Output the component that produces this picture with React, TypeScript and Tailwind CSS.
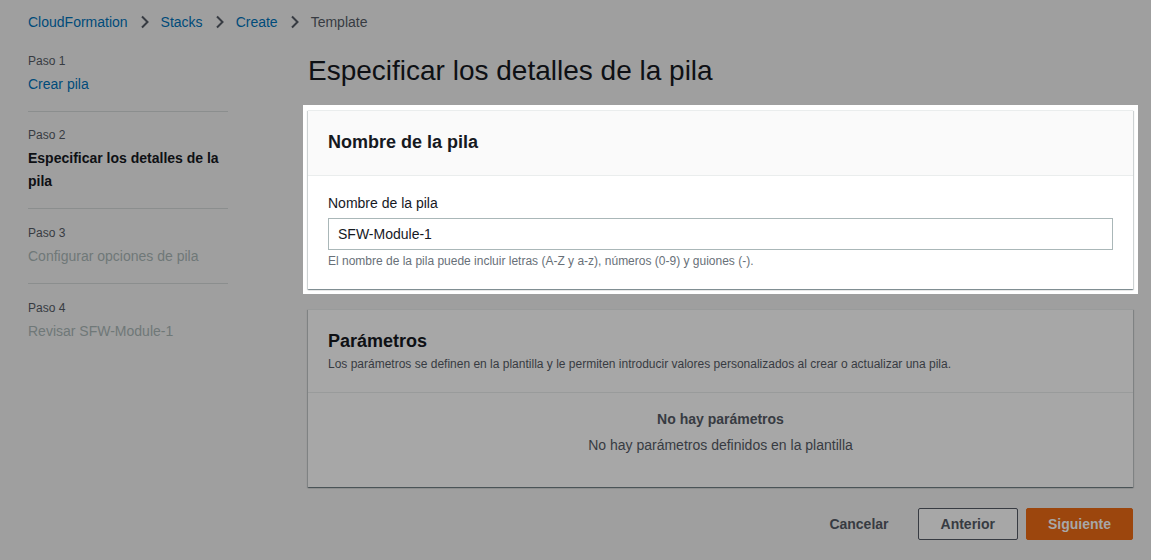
import { type FC } from 'react';

const FONT = { fontFamily: '"Liberation Sans", Arial, sans-serif' };

const Chevron: FC = () => (
  <svg width="9" height="14" viewBox="0 0 9 14" className="mx-[12px] shrink-0">
    <path d="M2 1.5 L7.5 7 L2 12.5" fill="none" stroke="#373b42" strokeWidth="2" />
  </svg>
);

type Step = { label: string; title: string; state: 'link' | 'current' | 'disabled' };

const STEPS: Step[] = [
  { label: 'Paso 1', title: 'Crear pila', state: 'link' },
  { label: 'Paso 2', title: 'Especificar los detalles de la pila', state: 'current' },
  { label: 'Paso 3', title: 'Configurar opciones de pila', state: 'disabled' },
  { label: 'Paso 4', title: 'Revisar SFW-Module-1', state: 'disabled' },
];

const stepTitleClass = (state: Step['state']) => {
  if (state === 'link') return 'text-[#004b7a]';
  if (state === 'current') return 'font-bold text-[#0e1014]';
  return 'text-[#6f7878]';
};

export default function App() {
  return (
    <div className="min-h-[560px] w-full bg-[#9f9f9f] px-[28px] pt-[12px] text-[14px]" style={FONT}>
      {/* breadcrumb */}
      <nav className="flex h-[20px] items-center leading-[20px]">
        <span className="text-[#004b7a]">CloudFormation</span>
        <Chevron />
        <span className="text-[#004b7a]">Stacks</span>
        <Chevron />
        <span className="text-[#004b7a]">Create</span>
        <Chevron />
        <span className="text-[#373b42]">Template</span>
      </nav>

      <div className="mt-[21px] flex gap-[80px]">
        {/* wizard steps */}
        <ul className="w-[200px] shrink-0">
          {STEPS.map((step, i) => (
            <li
              key={step.label}
              className={`pb-[15px] ${i === 1 ? 'pt-[15px]' : ''} ${i > 1 ? 'pt-[16px]' : ''} ${
                i < STEPS.length - 1 ? 'border-b border-[#8b8e8e]' : ''
              }`}
            >
              <div className="text-[12px] leading-[16px] text-[#373b42]">{step.label}</div>
              <div className={`mt-[4px] leading-[23px] ${stepTitleClass(step.state)}`}>{step.title}</div>
            </li>
          ))}
        </ul>

        {/* main column */}
        <div className="w-[825px] shrink-0">
          <h1 className="text-[28px] leading-[36px] text-[#0e1014]">Especificar los detalles de la pila</h1>

          {/* highlighted container (tour spotlight) */}
          <div className="mt-[16px] -mx-[5px] bg-white p-[5px]">
            <div className="bg-white shadow-[0_1px_1px_0_rgba(0,28,36,0.3),1px_1px_1px_0_rgba(0,28,36,0.15),-1px_1px_1px_0_rgba(0,28,36,0.15)] border-t border-[#eaeded]">
              <div className="border-b border-[#eaeded] bg-[#fafafa] px-[20px] pt-[18px] pb-[20px]">
                <h2 className="text-[18px] font-bold leading-[26px] text-[#16191f]">Nombre de la pila</h2>
              </div>
              <div className="px-[20px] pt-[16px] pb-[20px]">
                <label className="block leading-[22px] text-[#16191f]">Nombre de la pila</label>
                <div className="mt-[4px] flex h-[32px] items-center border border-[#aab7b8] px-[9px] text-[#16191f]">
                  SFW-Module-1
                </div>
                <p className="mt-[3px] text-[12px] leading-[16px] text-[#687078]">
                  El nombre de la pila puede incluir letras (A-Z y a-z), números (0-9) y guiones (-).
                </p>
              </div>
            </div>
          </div>

          {/* parameters (dimmed) */}
          <div className="mt-[15px] bg-[#a7a7a7] shadow-[0_1px_1px_0_rgba(0,18,24,0.35),1px_1px_1px_0_rgba(0,18,24,0.15),-1px_1px_1px_0_rgba(0,18,24,0.15)] border-t border-[#999b9b]">
            <div className="border-b border-[#999b9b] px-[20px] pt-[18px] pb-[20px]">
              <h2 className="text-[18px] font-bold leading-[26px] text-[#0e1014]">Parámetros</h2>
              <p className="mt-[2px] text-[12px] leading-[16px] text-[#373b42]">
                Los parámetros se definen en la plantilla y le permiten introducir valores personalizados al crear o actualizar una pila.
              </p>
            </div>
            <div className="px-[20px] pt-[15px] pb-[31px] text-center text-[#373b42]">
              <div className="font-bold leading-[22px]">No hay parámetros</div>
              <div className="mt-[4px] leading-[22px]">No hay parámetros definidos en la plantilla</div>
            </div>
          </div>

          {/* actions */}
          <div className="mt-[21px] flex justify-end gap-[8px]">
            <button type="button" className="h-[32px] px-[21px] font-bold text-[#373b42]">
              Cancelar
            </button>
            <button
              type="button"
              className="h-[32px] rounded-[2px] border border-[#373b42] bg-[#a7a7a7] px-[22px] font-bold text-[#373b42]"
            >
              Anterior
            </button>
            <button
              type="button"
              className="h-[32px] rounded-[2px] border border-[#9c460d] bg-[#9c460d] px-[21px] font-bold text-[#a7a7a7]"
            >
              Siguiente
            </button>
          </div>
        </div>
      </div>
    </div>
  );
}
